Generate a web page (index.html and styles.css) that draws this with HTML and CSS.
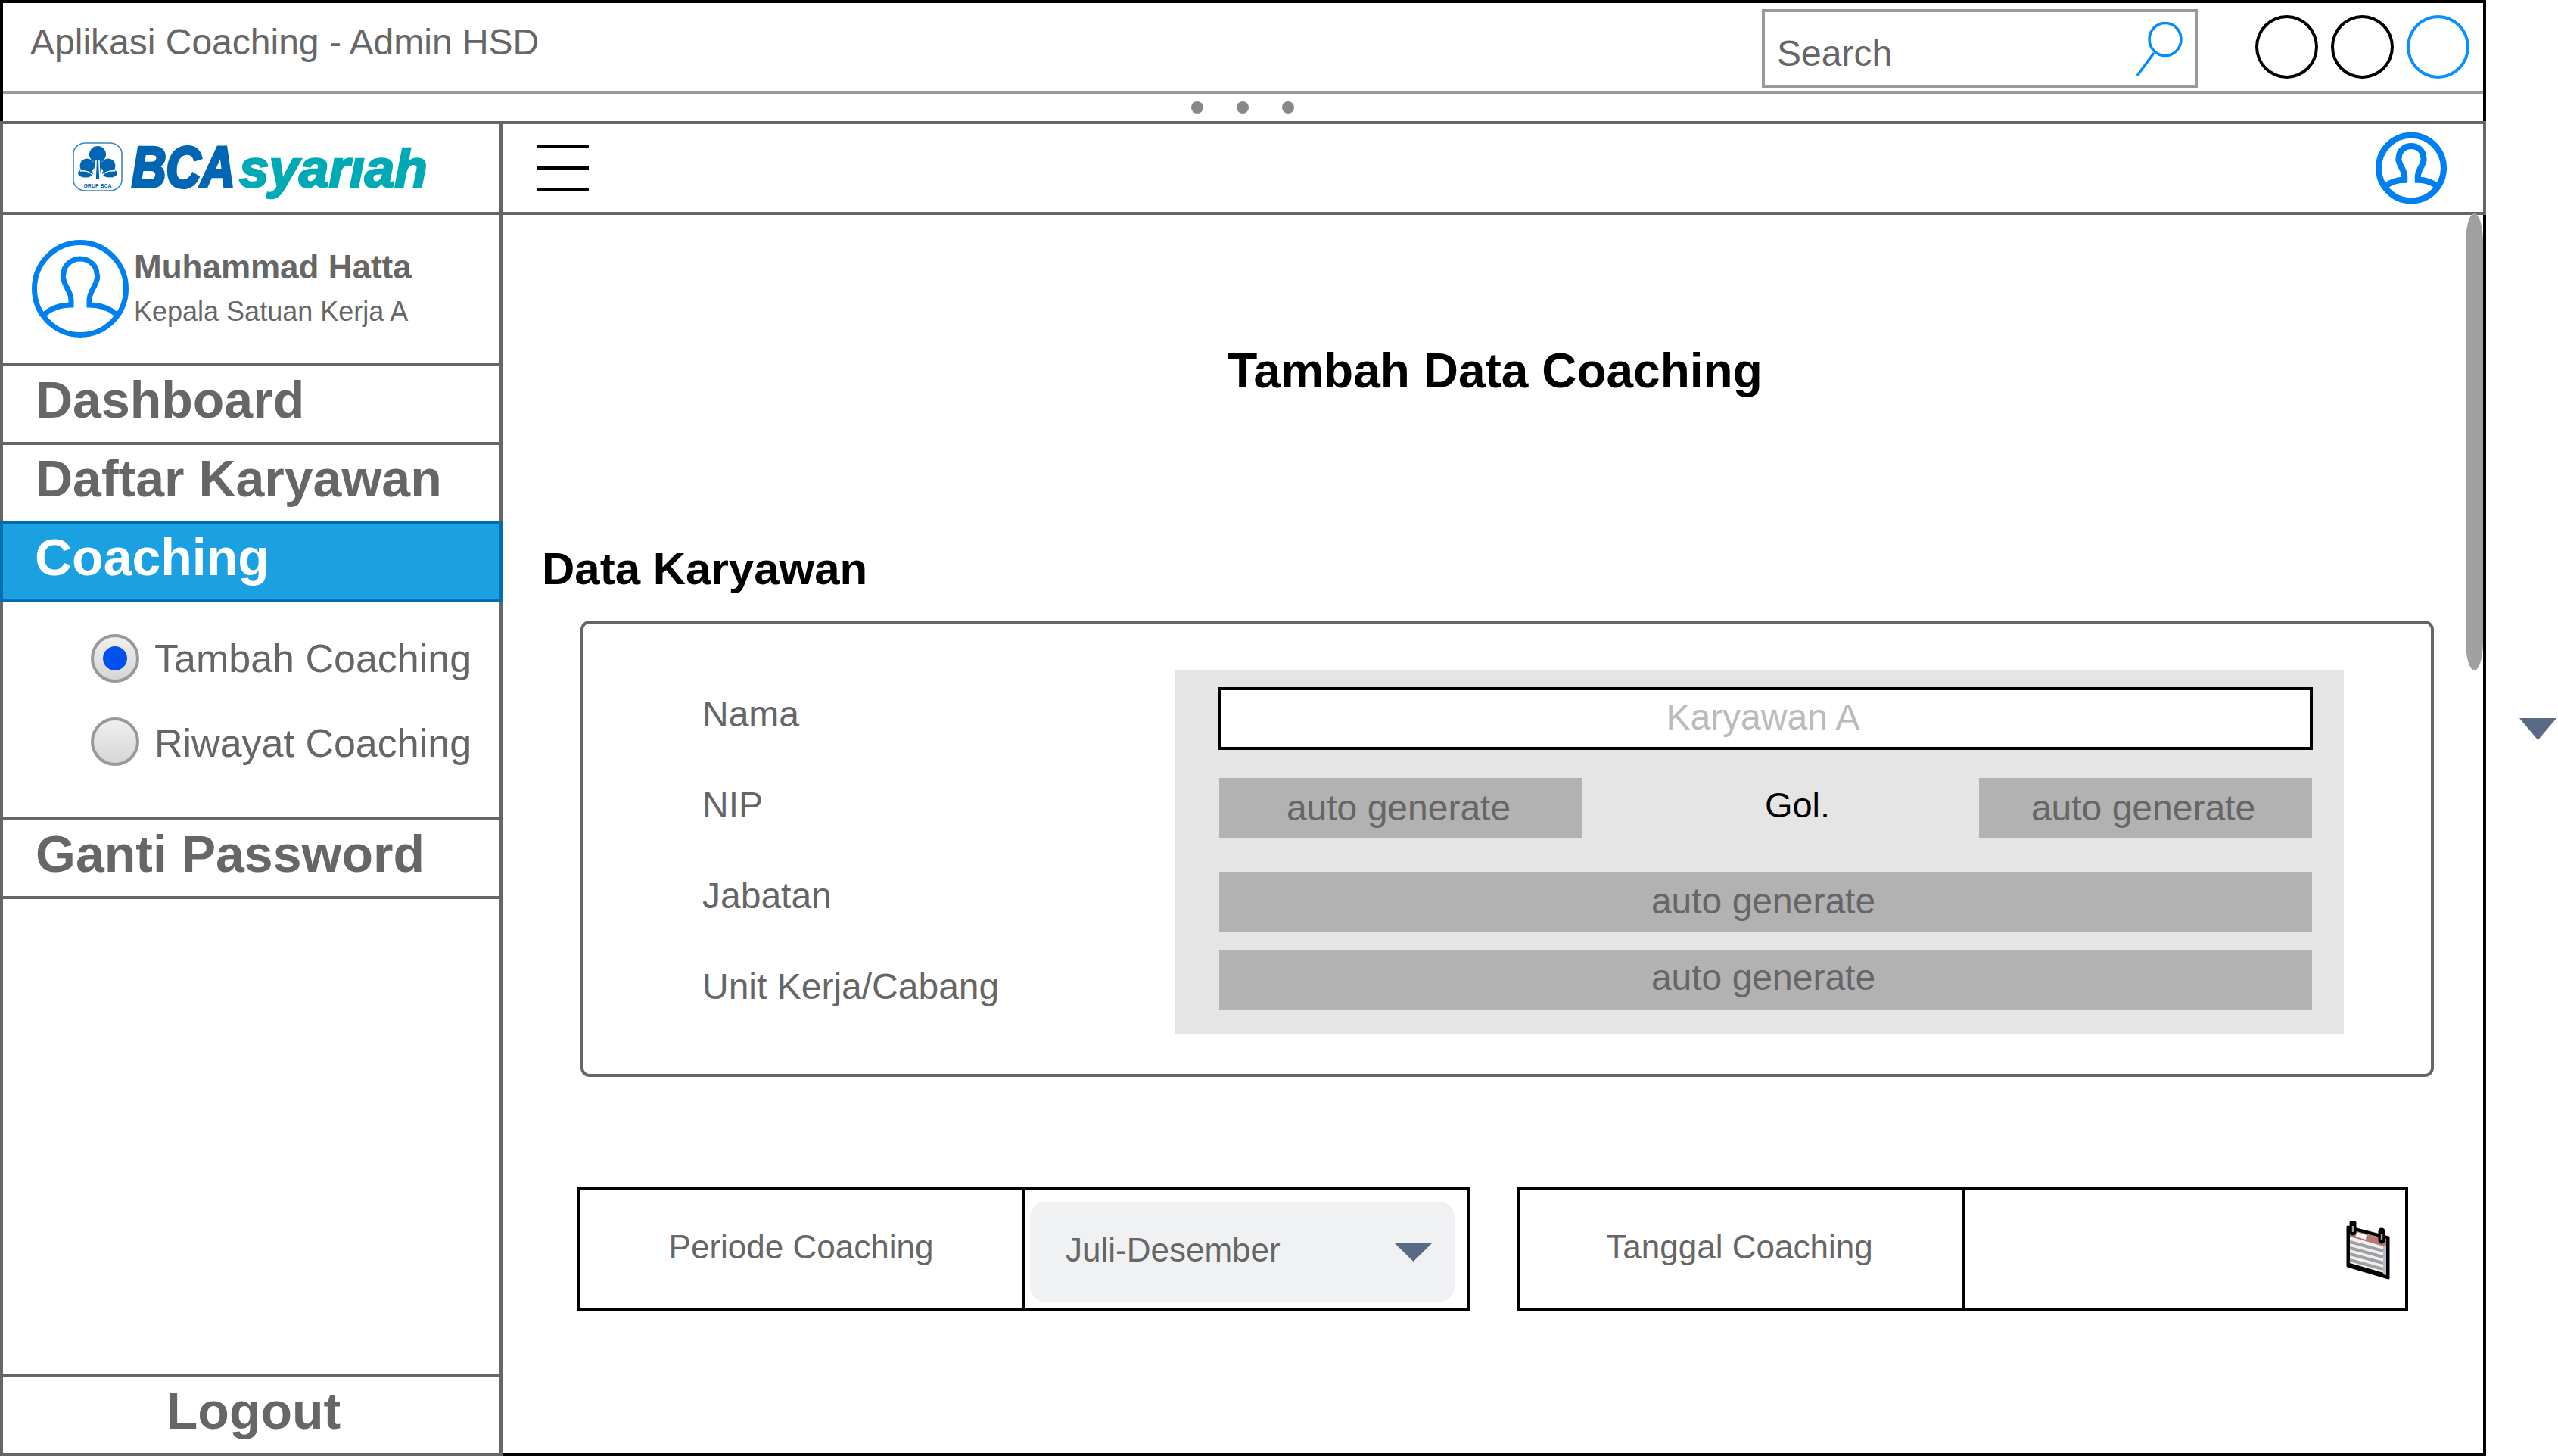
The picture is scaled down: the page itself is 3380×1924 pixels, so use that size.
FILE: index.html
```html
<!DOCTYPE html>
<html lang="id">
<head>
<meta charset="utf-8">
<title>Aplikasi Coaching - Admin HSD</title>
<link rel="stylesheet" href="styles.css">
</head>
<body>
<div class="stage">
  <div class="window">
    <div class="chrome">
      <div class="titlebar">
        <div class="app-title">Aplikasi Coaching - Admin HSD</div>
        <div class="search">
          <span class="search-text">Search</span>
          <svg class="search-icon" viewBox="0 0 62 72"><ellipse cx="39" cy="23" rx="21" ry="21.5" class="search-stroke"/><line x1="24" y1="41" x2="2" y2="71" class="search-stroke"/></svg>
        </div>
        <div class="controls">
          <span class="control"></span>
          <span class="control"></span>
          <span class="control control-blue"></span>
        </div>
      </div>
      <div class="dots"><span class="dot"></span><span class="dot"></span><span class="dot"></span></div>
    </div>
    <div class="app">
      <aside class="sidebar">
        <div class="logo-cell">
          <svg class="logo" viewBox="0 0 480 90" role="img" aria-label="BCA syariah">
            <rect x="7" y="5" width="64" height="63" rx="16" ry="14" class="emblem-frame"/>
            <g class="emblem-fill">
              <circle cx="39" cy="20" r="11"/>
              <circle cx="25" cy="35" r="9.5"/>
              <circle cx="53" cy="35" r="9.5"/>
              <ellipse cx="23" cy="45" rx="10" ry="5.5"/>
              <ellipse cx="55" cy="45" rx="10" ry="5.5"/>
              <path d="M33 30 L45 30 L41 53 L37 53 Z"/>
            </g>
            <path class="emblem-vein" d="M37 28 C37 40 36 46 36 53 M41 28 C41 40 42 46 42 53 M36 52 C32 44 24 41 16 42 M42 52 C46 44 54 41 62 42"/>
            <text x="39" y="64" class="emblem-text" text-anchor="middle">GRUP BCA</text>
            <text transform="translate(84 63) scale(1 1.2)" class="logo-bca">BCA</text>
            <text x="226" y="63" class="logo-syariah">syarıah</text>
          </svg>
        </div>
        <div class="user">
          <svg class="avatar avatar-large" viewBox="0 0 128 129"><ellipse cx="64" cy="64.5" rx="60.5" ry="61"/><path d="M17 98 C26 90 38 86 52 86 L52 80 C52 70 46 64 44 58 C41 52 41 47 42 45 C42 34 52 25 64 25 C76 25 86 34 86 45 C87 47 87 52 84 58 C82 64 76 70 76 80 L76 86 C90 86 102 90 111 98"/></svg>
          <div class="user-text">
            <div class="user-name">Muhammad Hatta</div>
            <div class="user-role">Kepala Satuan Kerja A</div>
          </div>
        </div>
        <div class="nav-item">Dashboard</div>
        <div class="nav-item">Daftar Karyawan</div>
        <div class="nav-item nav-active">Coaching</div>
        <div class="submenu">
          <div class="radio-row">
            <span class="radio"><span class="radio-dot"></span></span>
            <span class="radio-label">Tambah Coaching</span>
          </div>
          <div class="radio-row">
            <span class="radio"></span>
            <span class="radio-label radio-label-low">Riwayat Coaching</span>
          </div>
        </div>
        <div class="nav-item">Ganti Password</div>
        <div class="sidebar-space"></div>
        <div class="nav-item logout">Logout</div>
      </aside>
      <main class="main">
        <div class="topbar">
          <div class="hamburger"><span class="bar"></span><span class="bar"></span><span class="bar"></span></div>
          <svg class="avatar avatar-small" viewBox="0 0 128 129"><ellipse cx="64" cy="64.5" rx="58.5" ry="59"/><path d="M17 98 C26 90 38 86 52 86 L52 80 C52 70 46 64 44 58 C41 52 41 47 42 45 C42 34 52 25 64 25 C76 25 86 34 86 45 C87 47 87 52 84 58 C82 64 76 70 76 80 L76 86 C90 86 102 90 111 98"/></svg>
        </div>
        <div class="content">
          <div class="scrollbar"></div>
          <h1 class="page-title">Tambah Data Coaching</h1>
          <h2 class="section-title">Data Karyawan</h2>
          <section class="data-box">
            <div class="labels">
              <div class="label">Nama</div>
              <div class="label">NIP</div>
              <div class="label">Jabatan</div>
              <div class="label">Unit Kerja/Cabang</div>
            </div>
            <div class="panel">
              <div class="input-name">Karyawan A</div>
              <div class="row-split">
                <div class="auto auto-nip">auto generate</div>
                <div class="gol">Gol.</div>
                <div class="auto auto-gol">auto generate</div>
              </div>
              <div class="auto auto-wide auto-jabatan">auto generate</div>
              <div class="auto auto-wide auto-unit">auto generate</div>
            </div>
          </section>
          <div class="form-row">
            <div class="field field-period">
              <div class="field-label field-label-period">Periode Coaching</div>
              <div class="field-value">
                <div class="select">
                  <span class="select-text">Juli-Desember</span>
                  <svg class="select-arrow" viewBox="0 0 49 24"><polygon points="0,0 49,0 24.5,24"/></svg>
                </div>
              </div>
            </div>
            <div class="field field-date">
              <div class="field-label field-label-date">Tanggal Coaching</div>
              <div class="field-value field-value-date">
                <svg class="calendar" viewBox="0 0 58 78">
                  <polygon points="2,8 56,22 56,76 2,60" class="cal-outline"/>
                  <polygon points="5,12 53,24 53,70 5,56" class="cal-page"/>
                  <polygon points="5,12 53,24 53,35 5,21" class="cal-band"/>
                  <polygon points="14,15 27,19 26,25 13,21" class="cal-patch"/>
                  <polygon points="49,33 53,34 53,72 49,71" class="cal-shade"/>
                  <line x1="5" y1="28" x2="49" y2="40" class="cal-stripe"/>
                  <line x1="5" y1="36" x2="49" y2="48" class="cal-stripe"/>
                  <line x1="5" y1="44" x2="49" y2="56" class="cal-stripe"/>
                  <line x1="5" y1="52" x2="49" y2="64" class="cal-stripe"/>
                  <line x1="9" y1="3" x2="9" y2="15" class="cal-ring-back"/>
                  <line x1="47" y1="14" x2="47" y2="26" class="cal-ring-back"/>
                  <line x1="9" y1="7" x2="9" y2="15" class="cal-ring"/>
                  <line x1="47" y1="18" x2="47" y2="26" class="cal-ring"/>
                </svg>
              </div>
            </div>
          </div>
        </div>
      </main>
    </div>
  </div>
  <div class="gutter">
    <svg class="gutter-arrow" viewBox="0 0 49 29"><polygon points="0,0 49,0 24.5,29"/></svg>
  </div>
</div>
</body>
</html>
```

FILE: styles.css
```css
* { box-sizing: border-box; }
html, body { margin: 0; padding: 0; background: #fff; }
body { width: 3380px; height: 1924px; overflow: hidden; font-family: "Liberation Sans", Arial, sans-serif; color: #666; }

.stage { display: flex; width: 3380px; height: 1924px; }
.window { width: 3285px; height: 1924px; display: flex; flex-direction: column; border-top: 4px solid #000; }
.gutter { flex: 1; padding: 949px 2px 0 44px; }
.gutter-arrow { display: block; width: 49px; height: 29px; fill: #5a6a85; }

/* browser chrome */
.chrome { height: 156px; flex: none; border-left: 4px solid #000; border-right: 4px solid #000; }
.titlebar { height: 120px; display: flex; align-items: flex-start; border-bottom: 4px solid #999; padding-right: 18px; }
.app-title { font-size: 48px; line-height: 56px; margin: 24px 0 0 36px; }
.search { margin: 8px 0 0 auto; width: 576px; height: 104px; border: 4px solid #999; display: flex; justify-content: space-between; padding: 0 16px 0 16px; }
.search-text { font-size: 48px; padding-top: 14px; height: 96px; line-height: 82px; }
.search-icon { width: 62px; height: 72px; margin-top: 13px; }
.search-stroke { fill: none; stroke: #008cff; stroke-width: 3.5; }
.controls { display: flex; gap: 17px; margin: 16px 0 0 76px; }
.control { width: 83px; height: 84px; border: 4px solid #000; border-radius: 50%; }
.control-blue { border-color: #0a8fff; }
.dots { height: 36px; display: flex; justify-content: center; align-items: center; gap: 44px; padding-right: 2px; }
.dot { width: 16px; height: 16px; border-radius: 50%; background: #888; }

/* app */
.app { flex: 1; display: flex; min-height: 0; border-top: 4px solid #666; }
.sidebar { width: 664px; flex: none; display: flex; flex-direction: column; border-left: 4px solid #666; border-right: 4px solid #666; border-bottom: 4px solid #666; }
.logo-cell { height: 120px; flex: none; border-bottom: 4px solid #666; padding: 20px 0 0 86px; }
.logo { display: block; width: 480px; height: 90px; }
.emblem-frame { fill: #fff; stroke: #3b86c8; stroke-width: 1.6; }
.emblem-fill { fill: #0066b3; }
.emblem-vein { fill: none; stroke: #fff; stroke-width: 1.6; }
.emblem-text { font-family: "Liberation Sans", sans-serif; font-size: 7px; font-weight: 700; fill: #0066b3; }
.logo-bca { font-family: "Liberation Sans", sans-serif; font-size: 63px; font-weight: 700; font-style: italic; fill: #0066b3; stroke: #0066b3; stroke-width: 3.5; }
.logo-syariah { font-family: "Liberation Sans", sans-serif; font-size: 71px; font-weight: 700; font-style: italic; fill: #00aab5; stroke: #00aab5; stroke-width: 2.5; }

.user { height: 200px; flex: none; border-bottom: 4px solid #666; display: flex; align-items: flex-start; padding: 33px 0 0 38px; }
.avatar { display: block; fill: none; stroke: #0080f0; }
.avatar-large { width: 128px; height: 129px; stroke-width: 7; flex: none; }
.avatar-small { width: 94px; height: 96px; stroke-width: 11; flex: none; }
.user-text { margin: 11px 0 0 7px; }
.user-name { font-size: 44px; font-weight: 700; line-height: 50px; }
.user-role { font-size: 36px; line-height: 50px; margin-top: 9px; }

.nav-item { height: 104px; flex: none; border-bottom: 4px solid #666; padding: 0 0 12px 43px; display: flex; align-items: center; font-size: 68px; font-weight: 700; }
.nav-active { height: 108px; margin: -4px -4px 0; padding: 0 0 12px 42px; border: 4px solid #006eaf; background: #1ba1e2; color: #fff; }
.submenu { height: 288px; flex: none; border-bottom: 4px solid #666; padding: 42px 0 0 116px; display: flex; flex-direction: column; gap: 46px; }
.radio-row { display: flex; align-items: center; gap: 20px; height: 64px; }
.radio { width: 64px; height: 64px; flex: none; border: 4px solid #999; border-radius: 50%; background: linear-gradient(#efefef, #d6d6d6); display: flex; align-items: center; justify-content: center; }
.radio-dot { width: 32px; height: 32px; border-radius: 50%; background: #0050ef; }
.radio-label { font-size: 52px; line-height: 64px; white-space: nowrap; }
.radio-label-low { padding-top: 4px; }
.sidebar-space { flex: 1; border-bottom: 4px solid #666; }
.logout { height: 100px; border-bottom: 0; justify-content: center; padding: 0 0 12px 6px; }

/* main */
.main { flex: 1; min-width: 0; display: flex; flex-direction: column; }
.topbar { height: 120px; flex: none; border-bottom: 4px solid #666; border-right: 4px solid #666; display: flex; align-items: center; justify-content: space-between; padding: 0 48px 0 46px; }
.hamburger { display: flex; flex-direction: column; gap: 25px; width: 68px; }
.bar { height: 4px; background: #000; }
.content { flex: 1; position: relative; border-right: 4px solid #000; border-bottom: 4px solid #000; padding-left: 52px; }
.scrollbar { position: absolute; top: -2px; right: 0; width: 23px; height: 604px; background: #a0a0a0; border-radius: 12px / 40px; }
.page-title { margin: 168px 0 0 -52px; padding-left: 6px; text-align: center; font-size: 64px; line-height: 76px; font-weight: 700; color: #000; }
.section-title { margin: 190px 0 0; font-size: 60px; line-height: 68px; font-weight: 700; color: #000; }

.data-box { margin: 34px 0 0 51px; width: 2449px; height: 603px; border: 4px solid #666; border-radius: 12px; display: flex; padding: 60px 0 0 157px; }
.labels { width: 625px; flex: none; }
.label { font-size: 48px; line-height: 120px; white-space: nowrap; }
.panel { width: 1544px; height: 480px; flex: none; margin-top: 2px; background: #e5e5e5; padding: 22px 42px 0 58px; }
.input-name { height: 83px; margin: 0 -1px 0 -2px; border: 4px solid #000; background: #fff; color: #bbb; font-size: 48px; display: flex; align-items: center; justify-content: center; padding: 0 6px 5px 0; }
.row-split { display: flex; margin-top: 37px; }
.auto { background: #b2b2b2; font-size: 48px; height: 80px; display: flex; align-items: center; justify-content: center; }
.auto-nip { width: 480px; flex: none; padding: 0 6px 2px 0; }
.auto-gol { width: 440px; flex: none; padding: 0 6px 2px 0; }
.gol { flex: 1; color: #000; font-size: 47px; display: flex; align-items: center; justify-content: center; padding: 0 2px 10px 46px; }
.auto-jabatan { margin-top: 44px; padding: 0 6px 4px 0; }
.auto-unit { margin-top: 23px; padding: 0 6px 8px 0; }

.form-row { display: flex; gap: 63px; margin: 145px 0 0 46px; }
.field { height: 164px; border: 4px solid #000; display: flex; }
.field-period { width: 1180px; }
.field-date { width: 1177px; }
.field-label { flex: none; border-right: 3px solid #000; font-size: 44px; display: flex; align-items: center; justify-content: center; padding-bottom: 4px; }
.field-label-period { width: 588px; }
.field-label-date { width: 587px; padding-right: 5px; }
.field-value { flex: 1; min-width: 0; display: flex; padding: 16px 16px 8px 7px; }
.field-value-date { align-items: center; justify-content: flex-end; padding: 4px 20px 0 0; }
.select { flex: 1; border-radius: 20px; background: #f0f1f3; display: flex; align-items: center; justify-content: space-between; padding: 0 30px 4px 47px; font-size: 44px; }
.select-arrow { width: 49px; height: 24px; fill: #5a6a85; margin-top: 6px; }
.calendar { display: block; width: 58px; height: 78px; }
.cal-outline { fill: #000; stroke: #000; stroke-width: 3; stroke-linejoin: round; }
.cal-page { fill: #f0f0f2; }
.cal-band { fill: #b87a70; }
.cal-patch { fill: #fff; }
.cal-shade { fill: #b4bccf; }
.cal-stripe { stroke: #a0a0a0; stroke-width: 4; }
.cal-ring-back { stroke: #000; stroke-width: 9; stroke-linecap: round; }
.cal-ring { stroke: #9aa6b8; stroke-width: 2.5; }
```
